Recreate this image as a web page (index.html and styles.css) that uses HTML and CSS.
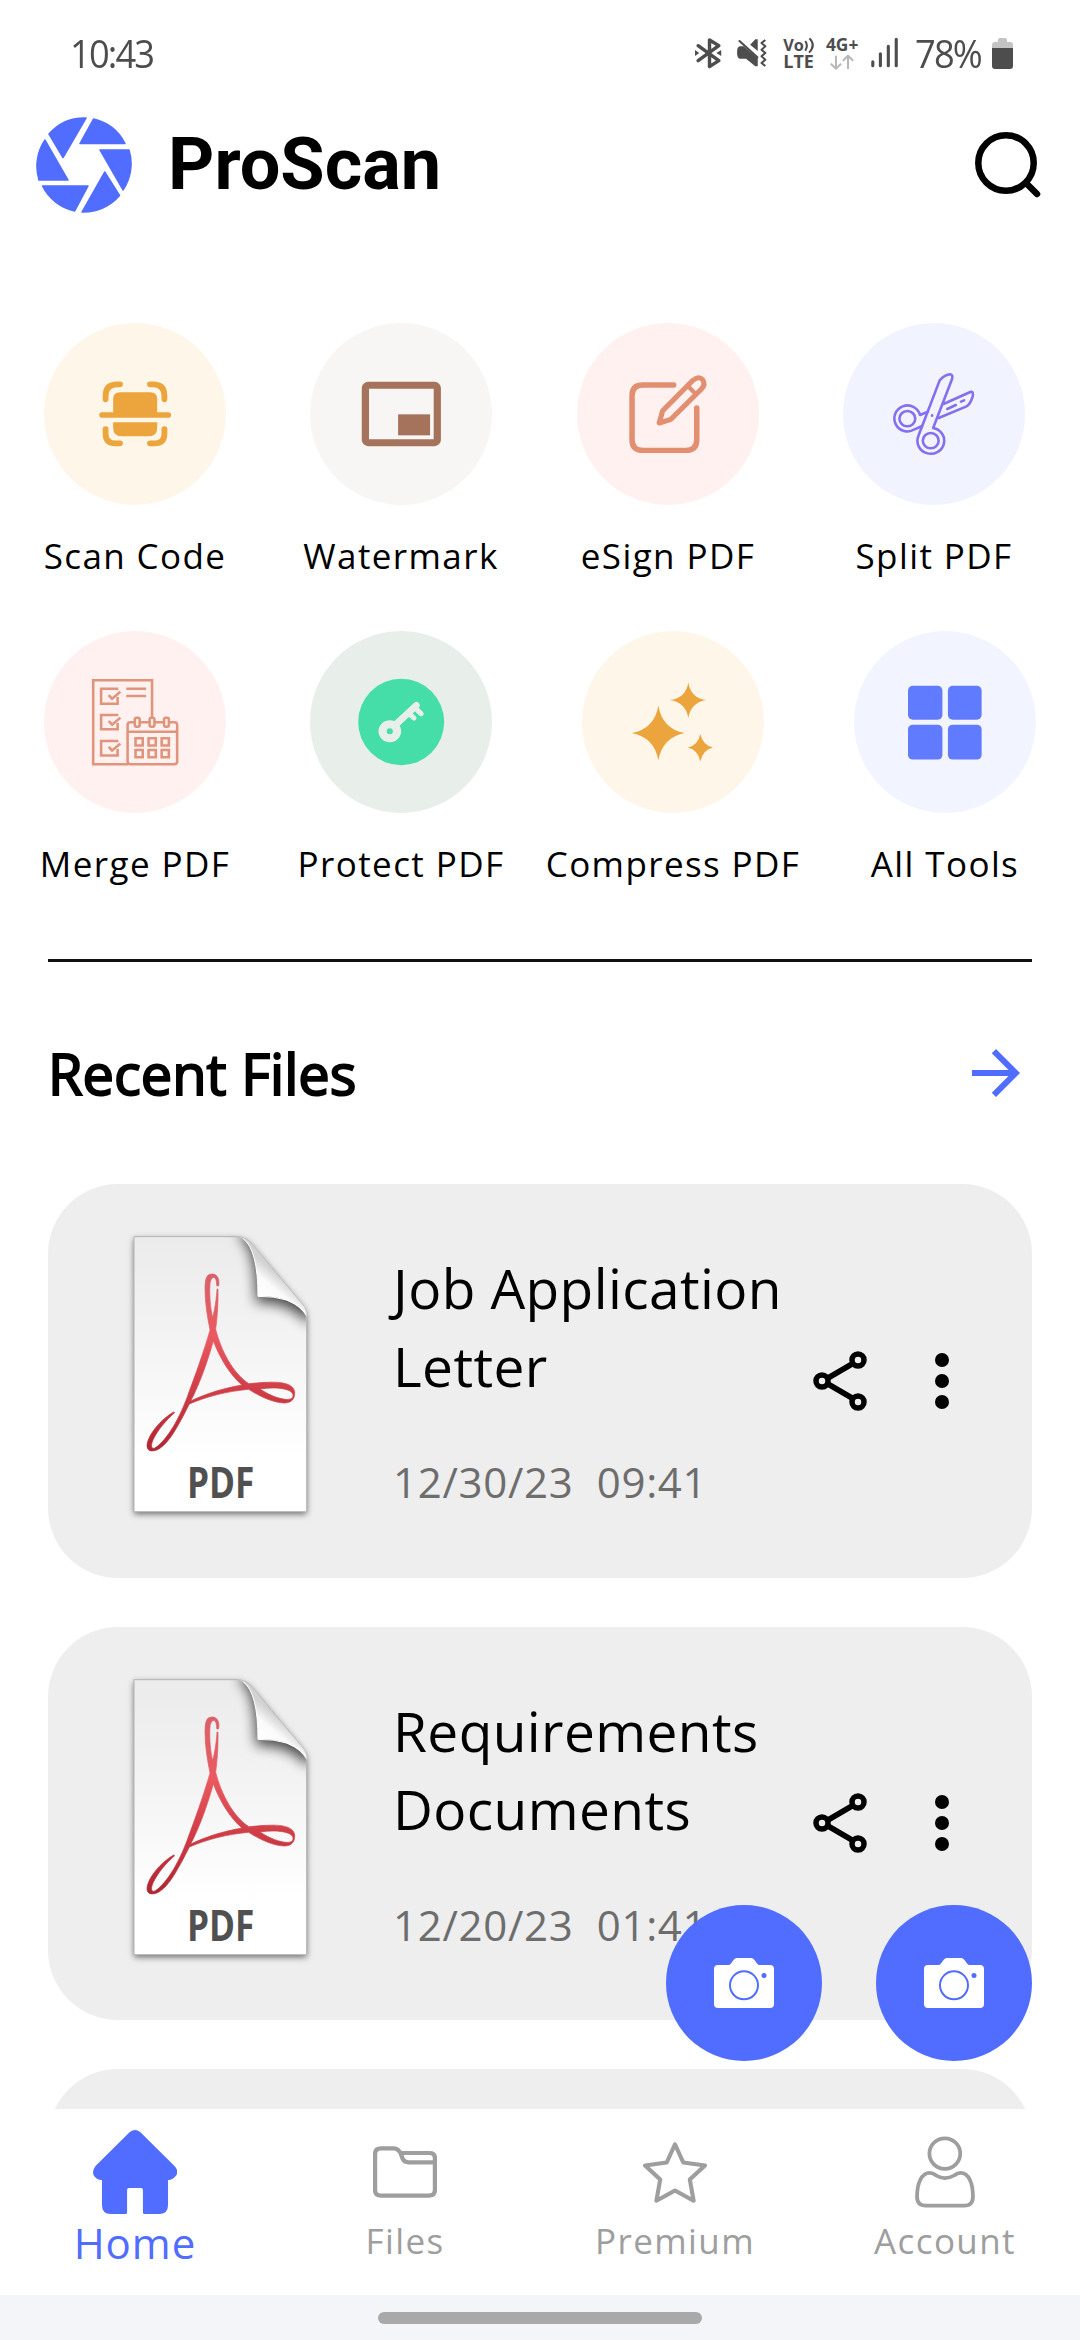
FILE: index.html
```html
<!DOCTYPE html>
<html lang="en">
<head>
<meta charset="utf-8">
<title>ProScan</title>
<link rel="stylesheet" href="styles.css">
</head>
<body>
<svg width="0" height="0" class="defs" aria-hidden="true">
  <defs>
    <linearGradient id="paper" x1="0" y1="0" x2="0" y2="1"><stop offset="0" stop-color="#ebebeb"/><stop offset=".4" stop-color="#f4f4f4"/><stop offset=".8" stop-color="#fff"/></linearGradient>
    <linearGradient id="red" gradientUnits="userSpaceOnUse" x1="0" y1="220" x2="0" y2="750"><stop offset="0" stop-color="#d9606a"/><stop offset=".35" stop-color="#ea5a60"/><stop offset=".7" stop-color="#cc3a44"/><stop offset="1" stop-color="#b02531"/></linearGradient>
    <linearGradient id="curl" gradientUnits="userSpaceOnUse" x1="480" y1="290" x2="535" y2="225"><stop offset="0" stop-color="#fff"/><stop offset=".55" stop-color="#fafafa"/><stop offset="1" stop-color="#d2d2d2"/></linearGradient>
    <filter id="drop" x="-20%" y="-20%" width="140%" height="140%"><feDropShadow dx="0" dy="7" stdDeviation="9" flood-color="#000" flood-opacity=".55"/></filter>
    <filter id="soft" x="-50%" y="-50%" width="200%" height="200%"><feGaussianBlur stdDeviation="19"/></filter>
    <clipPath id="sheet"><path d="M102 110H415Q440 112 456 132L606 312Q620 328 620 350V935H102Z"/></clipPath>
    <symbol id="pdf" viewBox="0 0 840 1050">
      <path d="M102 110H415Q440 112 456 132L606 312Q620 328 620 350V935H102Z" fill="url(#paper)" filter="url(#drop)"/>
      <g clip-path="url(#sheet)"><path d="M415 110Q468 130 468 308Q570 304 625 372L660 290L450 80Z" fill="#000" opacity=".7" filter="url(#soft)"/></g>
      <path d="M102 110H415Q440 112 456 132L606 312Q620 328 620 350V935H102Z" fill="none" stroke="#b4b4b4" stroke-width="3"/>
      <path d="M415 110Q474 130 474 289Q580 286 620 350Q620 328 606 312L456 132Q440 112 415 110Z" fill="url(#curl)"/>
      <path d="M430 116Q474 150 474 289Q575 288 615 335" fill="none" stroke="#fff" stroke-width="3"/>
      <path fill="url(#red)" stroke="url(#red)" stroke-width="2" fill-rule="evenodd" d="M350 257L356 258C360 232 349 222 336 222C320 222 315 234 315 268C315 310 322 350 330 390C310 460 284 530 262 590C240 650 204 718 165 744C152 748 152 735 160 718C172 692 198 660 224 638L221 636C190 654 166 680 150 708C139 730 137 746 150 752C178 758 205 725 226 690C243 662 256 636 268 612C320 590 380 574 446 568C480 590 520 608 552 609C576 609 585 596 584 576C582 552 546 544 500 547C482 547 464 550 446 551C400 520 364 455 347 388C352 350 355 310 354 267L351 267C349 300 344 330 338 352C331 325 328 285 330 252C332 228 350 222 350 257ZM340 423C360 475 390 525 426 555C370 565 320 580 272 603C300 550 324 480 340 423ZM480 567C530 560 575 566 579 584C580 598 566 600 550 597C525 593 500 580 480 567Z"/>
      <text x="261" y="893" textLength="202" lengthAdjust="spacingAndGlyphs" class="pdf-word">PDF</text>
    </symbol>
    <symbol id="share" viewBox="0 0 55 60">
      <g fill="none" stroke="#000" stroke-width="5.5"><path d="M39 13L15 27M15 33L39 47"/><circle cx="45" cy="9" r="6"/><circle cx="9" cy="30" r="6"/><circle cx="45" cy="51" r="6"/></g>
    </symbol>
    <symbol id="more" viewBox="0 0 14 58"><circle cx="7" cy="8" r="7"/><circle cx="7" cy="29" r="7"/><circle cx="7" cy="50" r="7"/></symbol>
    <symbol id="camera" viewBox="0 0 60 50">
      <path d="M4 7H14Q16 7 17 5.500L19.500 2Q21 0 23 0H37Q39 0 40.500 2L43 5.500Q44 7 46 7H56Q60 7 60 11V46Q60 50 56 50H4Q0 50 0 46V11Q0 7 4 7Z" fill="#fff"/>
      <circle cx="30" cy="27.300" r="14" fill="none" stroke="#506dff" stroke-width="2"/><circle cx="50" cy="17.500" r="2.500" fill="#506dff"/>
    </symbol>
  </defs>
</svg>

<div class="status">
  <span class="time">10:43</span>
  <svg class="status-icons" viewBox="450 105 595 110" preserveAspectRatio="none" fill="none" stroke="#4d4d4d">
    <g stroke-width="10" stroke-linecap="round" stroke-linejoin="round"><path d="M462 137L522 182L495 200V120L522 137L462 182"/></g>
    <path d="M453 150L465 159L453 168ZM529 150L515 159L529 168ZM577 143Q575 148 575 158Q575 175 583 176H601L628 199H635V175L594 139H582ZM613 134L628 118H635V153Z" fill="#4d4d4d" stroke="none"/>
    <path d="M582 123L634 172" stroke-width="6" stroke-linecap="round"/>
    <path d="M657 120L646 129L657 139L646 149L657 159L646 169L657 179L646 189L657 198" stroke-width="6" stroke-linejoin="round"/>
    <path d="M773 123Q782 136 773 152M785 115Q805 135 784 158" stroke-width="6"/>
    <g fill="#4d4d4d" stroke="none" class="tiny">
      <text x="709" y="153" font-size="50" textLength="60" lengthAdjust="spacingAndGlyphs">Vo</text>
      <text x="709" y="205" font-size="53" textLength="89" lengthAdjust="spacingAndGlyphs">LTE</text>
      <text x="833" y="154" font-size="52" textLength="94" lengthAdjust="spacingAndGlyphs">4G+</text>
    </g>
    <path d="M862 167V205M847 191L862 206L877 191M897 207V167M882 182L897 167L912 182" stroke="#b8b8b8" stroke-width="6"/>
    <path d="M969 185V197M991 161V197M1014 139V197M1037 118V197" stroke-width="9" stroke-linecap="round"/>
  </svg>
  <span class="percent">78%</span>
  <svg class="battery" viewBox="0 0 21 31"><path d="M6 4V2Q6 0 8 0H13Q15 0 15 2V4H18Q21 4 21 7V11H0V7Q0 4 3 4Z" fill="#c4c4c4"/><path d="M0 10H21V28Q21 31 18 31H3Q0 31 0 28Z" fill="#4d4d4d"/></svg>
</div>

<header class="header">
  <svg class="logo" viewBox="36 117 96 96" fill="#506dff" stroke="#506dff" stroke-width="1.500" stroke-linejoin="round">
    <path d="M86 118L63 157.500L49 134A47 47 0 0 1 86 118Z"/><path d="M93.500 119L80 143.500H125A47 47 0 0 0 93.500 119Z"/><path d="M100 150H129A47 47 0 0 1 123 190Z"/><path d="M104.700 172L119.500 195.500A47 47 0 0 1 82 212Z"/><path d="M42.500 186H88L74.700 211A47 47 0 0 1 42.500 186Z"/><path d="M45 140L68 180H39A47 47 0 0 1 45 140Z"/>
  </svg>
  <h1 class="brand">ProScan</h1>
  <svg class="search" viewBox="0 0 66 66" fill="none" stroke="#000" stroke-width="6.500" stroke-linecap="round"><circle cx="31" cy="31" r="27.700"/><path d="M52 52L62 62"/></svg>
</header>

<section class="tools">
  <div class="tool"><div class="disc cream">
    <svg viewBox="127 68 529 546" preserveAspectRatio="none" fill="none" stroke="#eca43d" stroke-width="17" stroke-linecap="round"><path d="M306 297V286Q306 252 340 252H348M435 252H444Q477 252 477 286V297M306 386V400Q306 429 335 429H348M435 429H448Q477 429 477 400V386M296 344H488"/><path d="M328 340V296Q328 276 348 276H436Q456 276 456 296V340ZM328 366H456V382Q456 408 430 408H354Q328 408 328 382Z" fill="#eca43d" stroke="none"/></svg>
  </div><span class="label">Scan Code</span></div>
  <div class="tool"><div class="disc gray">
    <svg viewBox="900 68 529 546" preserveAspectRatio="none"><rect x="1061" y="255" width="209" height="172" rx="8" fill="none" stroke="#a5735c" stroke-width="21"/><rect x="1156" y="342" width="93" height="63" fill="#a5735c"/></svg>
  </div><span class="label">Watermark</span></div>
  <div class="tool"><div class="disc pink">
    <svg viewBox="106 68 529 546" preserveAspectRatio="none" fill="none" stroke="#e18e71" stroke-width="16" stroke-linecap="round" stroke-linejoin="round"><path d="M387 254H298Q266 254 266 286V418Q266 450 298 450H422Q454 450 454 418V323"/><path d="M345 368L355 331L443 240Q460 225 471 238Q481 252 467 267L379 357Z" stroke-width="15"/><path d="M431 260L451 281" stroke-width="12"/></svg>
  </div><span class="label">eSign PDF</span></div>
  <div class="tool"><div class="disc lilac">
    <svg viewBox="880 68 529 546" preserveAspectRatio="none" fill="none" stroke="#8270ee" stroke-width="7.500" stroke-linecap="round" stroke-linejoin="round"><path d="M1161 240Q1176 223 1192 222Q1200 223 1197 236L1142 383A39 39 0 1 1 1099 407Z"/><circle cx="1135" cy="421" r="23"/><path d="M1127 334L1104 344A38 39 0 1 0 1088 387L1110 377"/><circle cx="1067" cy="355" r="23"/><path d="M1172 311L1250 275Q1260 272 1257 288Q1250 312 1239 318L1158 353M1183 326L1208 314M1223 304L1232 300M1139 345V346"/></svg>
  </div><span class="label">Split PDF</span></div>
</section>
<section class="tools tools-second">
  <div class="tool"><div class="disc pink">
    <svg viewBox="127 63 529 548" preserveAspectRatio="none" fill="none" stroke="#df947b" stroke-width="7.500"><path d="M441 326V211H270V464H372"/><rect x="370" y="338" width="144" height="126" rx="8"/><path d="M370 366H514M366 237H424M366 259H424"/><g fill="#fff1f0"><rect x="391" y="324" width="14" height="27" rx="5"/><rect x="434" y="324" width="14" height="27" rx="5"/><rect x="476" y="324" width="14" height="27" rx="5"/></g><path d="M393 386H414V408H393ZM431 386H452V408H431ZM469 386H490V408H469ZM393 421H414V443H393ZM431 421H452V443H431ZM469 421H490V443H469Z"/><path d="M343 237H293V282H341V262M315 256L325 267L349 246M343 316H293V359H341V340M315 334L325 345L349 324M343 394H293V438H341V418M315 412L325 423L349 402"/></svg>
  </div><span class="label">Merge PDF</span></div>
  <div class="tool"><div class="disc mint">
    <svg viewBox="900 63 529 548" preserveAspectRatio="none"><ellipse cx="1165" cy="337" rx="125" ry="130" fill="#45dea9"/><g fill="none" stroke="#e8efeb"><circle cx="1132" cy="365" r="21" stroke-width="24"/><path d="M1148 346L1209 287" stroke-width="20" stroke-linecap="round"/><path d="M1187 311L1202 325M1207 296L1223 312" stroke-width="15" stroke-linecap="round"/></g></svg>
  </div><span class="label">Protect PDF</span></div>
  <div class="tool"><div class="disc cream">
    <svg viewBox="122 63 529 548" preserveAspectRatio="none" fill="#eca43d"><path d="M344 287Q355 357 420 370Q355 384 344 453Q333 384 267 370Q333 357 344 287ZM431 218Q438 265 484 271Q438 279 431 325Q424 279 377 271Q424 265 431 218ZM466 373Q473 407 503 414Q473 421 466 456Q459 421 430 414Q459 407 466 373Z"/></svg>
  </div><span class="label">Compress PDF</span></div>
  <div class="tool"><div class="disc blue">
    <svg viewBox="912 63 529 548" preserveAspectRatio="none" fill="#617bff"><rect x="1069" y="228" width="100" height="102" rx="14"/><rect x="1185" y="228" width="98" height="102" rx="14"/><rect x="1069" y="345" width="100" height="105" rx="14"/><rect x="1185" y="345" width="98" height="105" rx="14"/></svg>
  </div><span class="label">All Tools</span></div>
</section>

<hr class="divider">

<div class="section-head">
  <h2 class="section-title">Recent Files</h2>
  <svg class="arrow" viewBox="0 0 24 24"><path d="M12 4l-1.410 1.410L16.170 11H4v2h12.170l-5.580 5.590L12 20l8-8z" fill="#506dff"/></svg>
</div>

<main class="files">
  <article class="file">
    <svg class="thumb"><use href="#pdf"/></svg>
    <div class="info"><h3 class="name">Job Application<br>Letter</h3><p class="date">12/30/23&nbsp; 09:41</p></div>
    <svg class="share"><use href="#share"/></svg><svg class="more"><use href="#more"/></svg>
  </article>
  <article class="file">
    <svg class="thumb"><use href="#pdf"/></svg>
    <div class="info"><h3 class="name">Requirements<br>Documents</h3><p class="date">12/20/23&nbsp; 01:41</p></div>
    <svg class="share"><use href="#share"/></svg><svg class="more"><use href="#more"/></svg>
  </article>
  <article class="file"></article>
</main>

<div class="fabs">
  <div class="fab"><svg class="camera"><use href="#camera"/></svg></div>
  <div class="fab"><svg class="camera"><use href="#camera"/></svg></div>
</div>

<nav class="nav">
  <div class="tab active"><div class="tab-icon"><svg width="84" height="84" viewBox="270 240 244 252" preserveAspectRatio="none" fill="#506dff"><path d="M377 246Q392 234 407 246L506 347Q520 362 512 376Q503 390 488 390V464Q488 492 462 492H420Q415 492 415 488V420Q415 414 409 414H375Q369 414 369 420V488Q369 492 364 492H322Q296 492 296 464V390Q279 390 272 376Q266 362 278 347Z"/></svg></div><span>Home</span></div>
  <div class="tab"><div class="tab-icon"><svg width="64" height="52" viewBox="1083 288 186 156" preserveAspectRatio="none" fill="none" stroke="#9e9e9e" stroke-width="12.500"><path d="M1106 295H1143Q1153 295 1160 305L1164 309H1247Q1263 309 1263 324V420Q1263 437 1245 437H1106Q1089 437 1089 420V312Q1089 295 1106 295ZM1162 306L1169 326Q1174 337 1186 337H1263"/></svg></div><span>Files</span></div>
  <div class="tab"><div class="tab-icon"><svg width="64" height="61" viewBox="299 275 186 184" preserveAspectRatio="none" fill="none" stroke="#9e9e9e" stroke-width="12" stroke-linejoin="round"><path d="M392 282L416 337L479 346L435 388L446 452L392 421L338 452L349 388L305 346L368 337Z"/></svg></div><span>Premium</span></div>
  <div class="tab"><div class="tab-icon"><svg width="60" height="72" viewBox="1088 257 175 217" preserveAspectRatio="none" fill="none" stroke="#9e9e9e" stroke-width="11"><ellipse cx="1175" cy="310" rx="45" ry="46"/><path d="M1131 368Q1140 368 1150 376Q1175 392 1202 376Q1212 368 1221 368C1245 368 1257 400 1257 440Q1257 467 1232 467H1120Q1094 467 1094 440C1094 400 1107 368 1131 368Z"/></svg></div><span>Account</span></div>
</nav>
<div class="gesture"><div class="pill"></div></div>
</body>
</html>
```
FILE: styles.css
```css
* { box-sizing: border-box; }
body {
  margin: 0;
  width: 1080px;
  height: 2340px;
  overflow: hidden;
  position: relative;
  display: flex;
  flex-direction: column;
  background: #fff;
  color: #000;
  font-family: "Open Sans", "Noto Sans", sans-serif;
}
h1, h2, h3, p { margin: 0; font-weight: 400; }
svg { display: block; flex: none; }
.defs { position: absolute; }

.status {
  height: 84px;
  padding: 22px 67px 0 70px;
  display: flex;
  align-items: center;
  color: #4d4d4d;
  font-family: "Open Sans", sans-serif;
  font-size: 39px;
  line-height: 62px;
}
.time { letter-spacing: -2px; transform: scaleX(.93); transform-origin: 0 50%; }
.status-icons { width: 205px; height: 36.700px; margin-left: auto; overflow: visible; }
.tiny { font-family: "Open Sans", sans-serif; font-weight: 700; }
.percent {
  width: 61px;
  margin-left: 16px;
  letter-spacing: -2px;
  white-space: nowrap;
  transform: scaleX(.93);
  transform-origin: 0 50%;
}
.battery { width: 21px; height: 31px; margin-left: 16px; }

.header {
  height: 162px;
  padding: 0 39px 0 36px;
  display: flex;
  align-items: center;
}
.logo { width: 96px; height: 96px; }
.brand {
  margin-left: 36px;
  font: 700 72px/80px Roboto, sans-serif;
}
.search { width: 66px; height: 66px; margin-left: auto; }

.tools {
  display: grid;
  grid-template-columns: 266px 267px 266px 182px;
  padding: 77px 0 0 44px;
}
.tools-second {
  grid-template-columns: 266px 272px 272px 182px;
  padding-top: 52px;
}
.tool {
  width: 182px;
  display: flex;
  flex-direction: column;
  align-items: center;
  gap: 28px;
}
.disc { width: 182px; height: 182px; border-radius: 50%; overflow: hidden; }
.disc svg { width: 182px; height: 182px; }
.cream { background: #fff6ea; }
.gray { background: #f7f6f5; }
.pink { background: #fff1f0; }
.lilac { background: #f1f3ff; }
.mint { background: #e8efeb; }
.blue { background: #f2f5ff; }
.label { font-size: 35px; line-height: 46px; letter-spacing: 1.400px; white-space: nowrap; }

.divider { width: 984px; height: 3px; margin: 72px 48px 0; border: 0; background: #111; flex: none; }

.section-head {
  height: 72px;
  margin: 75px 48px;
  display: flex;
  align-items: center;
  justify-content: space-between;
  flex: none;
}
.section-title { font-size: 56px; line-height: 72px; -webkit-text-stroke: 2px #000; }
.arrow { width: 72px; height: 72px; }

.files {
  height: 925px;
  padding: 0 48px;
  overflow: hidden;
  display: flex;
  flex-direction: column;
  gap: 48.750px;
  flex: none;
}
.file {
  height: 393.750px;
  flex: none;
  display: flex;
  align-items: center;
  padding: 0 83px 0 52px;
  border-radius: 70px;
  background: #eee;
}
.thumb { width: 280px; height: 350px; align-self: flex-start; margin-top: 16px; }
.pdf-word { font-family: "Open Sans", sans-serif; font-weight: 700; font-size: 127px; fill: #505050; }
.info { align-self: flex-start; margin-left: 13px; padding-top: 65px; }
.name { font-size: 55px; line-height: 78px; letter-spacing: .400px; white-space: nowrap; }
.date { margin-top: 48px; font-size: 42px; line-height: 58px; letter-spacing: .700px; color: #6d6d6d; }
.share { width: 55px; height: 60px; margin-left: auto; }
.more { width: 14px; height: 58px; margin-left: 67px; }

.fabs { position: absolute; right: 48px; top: 1905px; display: flex; gap: 54px; }
.fab {
  width: 156px;
  height: 156px;
  border-radius: 50%;
  background: #506dff;
  display: flex;
  align-items: center;
  justify-content: center;
}
.camera { width: 60px; height: 50px; }

.nav {
  height: 186px;
  display: grid;
  grid-template-columns: repeat(4, 270px);
  padding-top: 21px;
  background: #fff;
  flex: none;
}
.tab {
  display: flex;
  flex-direction: column;
  align-items: center;
  color: #9e9e9e;
  font-size: 35px;
  line-height: 54px;
  letter-spacing: 1.400px;
}
.tab-icon { height: 84px; display: flex; align-items: center; }
.active { color: #506dff; font-size: 42px; line-height: 58px; letter-spacing: 1px; }

.gesture {
  height: 45px;
  display: flex;
  align-items: center;
  justify-content: center;
  background: #f4f5f8;
  flex: none;
}
.pill { width: 324px; height: 12px; border-radius: 6px; background: #a9a9a9; }
```
